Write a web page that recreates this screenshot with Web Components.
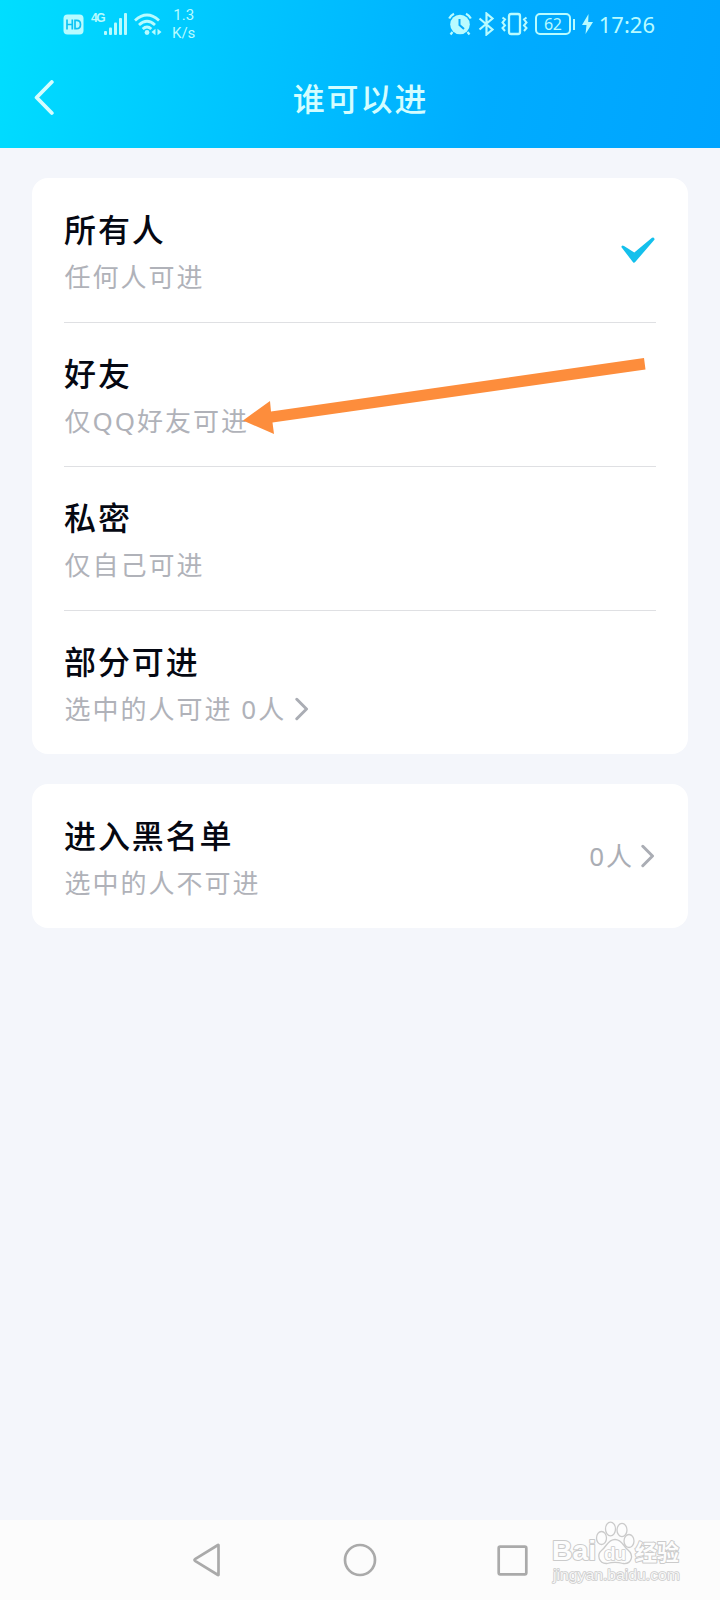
<!DOCTYPE html>
<html lang="zh-CN">
<head>
<meta charset="utf-8">
<meta name="viewport" content="width=device-width, initial-scale=1">
<title>谁可以进</title>
<style>
  html, body {
    margin: 0;
    padding: 0;
  }
  body {
    width: 720px;
    height: 1600px;
    overflow: hidden;
    font-family: "Noto Sans", "Noto Sans CJK SC", sans-serif;
  }
</style>
</head>
<body>
<access-page>
  <page-header slot="header">谁可以进</page-header>

  <setting-card>
    <setting-row>
      所有人
      <span slot="note">任何人可进</span>
      <app-icon slot="end" name="check"></app-icon>
    </setting-row>
    <setting-row>
      好友
      <span slot="note">仅QQ好友可进</span>
    </setting-row>
    <setting-row>
      私密
      <span slot="note">仅自己可进</span>
    </setting-row>
    <setting-row>
      部分可进
      <span slot="note">选中的人可进 0人</span>
      <app-icon slot="more" name="next"></app-icon>
    </setting-row>
  </setting-card>

  <setting-card>
    <setting-row>
      进入黑名单
      <span slot="note">选中的人不可进</span>
      <span slot="end">0人</span>
      <app-icon slot="end" name="next"></app-icon>
    </setting-row>
  </setting-card>

  <pointer-arrow slot="overlay"></pointer-arrow>
  <nav-bar slot="footer"></nav-bar>
  <site-mark slot="overlay"></site-mark>
</access-page>

<script>
const ICONS = {
  hd: [21, 21, `
    <rect x=".5" y=".5" width="20" height="20" rx="4" fill="currentColor"/>
    <path d="M4 5.5v10M9.3 5.5v10M4 10.5h5.3M12 6.3v8.4h1.6c2.7 0 3.9-1.6 3.9-4.2s-1.2-4.2-3.9-4.2z" fill="none" stroke="#0cc3f4" stroke-width="1.7"/>`],
  signal: [24, 22, `
    <g fill="currentColor">
      <rect x="0" y="18" width="3" height="4" rx="1"/>
      <rect x="5" y="14.500" width="3" height="7.500" rx="1"/>
      <rect x="10" y="9.500" width="3" height="12.500" rx="1"/>
      <rect x="15" y="5" width="3" height="17" rx="1"/>
      <rect x="20" y="0" width="3" height="22" rx="1"/>
    </g>`],
  wifi: [28, 23, `
    <g fill="none" stroke="currentColor" stroke-width="2.800">
      <path d="M1 7.500Q13 -3.500 25 7.500"/>
      <path d="M5 12Q13 4.500 21 12"/>
      <path d="M8.700 16Q13 12 17.300 16"/>
    </g>
    <circle cx="13" cy="19.500" r="2.400" fill="currentColor"/>
    <path d="M17.500 19l4-3.300v6.600zM27.500 19l-4-3.300v6.600z" fill="currentColor"/>`],
  alarm: [24, 24, `
    <circle cx="12" cy="12.500" r="9.800" fill="currentColor"/>
    <path d="M1.200 6.500A11 11 0 0 1 6 1.700M18 1.700A11 11 0 0 1 22.800 6.500M4.500 20l-2 2.500M19.500 20l2 2.500" fill="none" stroke="currentColor" stroke-width="2.200"/>
    <path d="M11.500 7v6l4.500 4" fill="none" stroke="#07a9fa" stroke-width="2"/>`],
  bluetooth: [17, 24, `
    <path d="M1.500 6.500L14.500 17.500L8.500 22.500V1.500L14.500 6.500L1.500 17.500" fill="none" stroke="currentColor" stroke-width="2.200"/>`],
  vibrate: [27, 24, `
    <rect x="8" y="2" width="11" height="20" rx="2" fill="none" stroke="currentColor" stroke-width="2.300"/>
    <path d="M1.500 5.500l2.500 2-2.500 3 2.500 3-2.500 2.500 2.500 3M25.500 5.500l-2.500 2 2.500 3-2.500 3 2.500 2.500-2.500 3" fill="none" stroke="currentColor" stroke-width="2"/>`],
  bolt: [11, 20, `
    <path d="M6.500 0L0 11h4.500L3.500 20L11 8H6.200z" fill="currentColor"/>`],
  back: [20, 36, `
    <path d="M17.800 2L2.600 17.500L17.800 33" fill="none" stroke="currentColor" stroke-width="3.800" stroke-linecap="round" stroke-linejoin="round"/>`],
  next: [14, 24, `
    <path d="M1.800 2.300L11.500 12L1.800 21.700" fill="none" stroke="#aaadb4" stroke-width="3" stroke-linecap="round" stroke-linejoin="round"/>`],
  check: [34, 26, `
    <path d="M.3 10Q.8 7.600 3 9L13.300 15.500L31 .8Q33.300 -.2 33.600 2.400L14 25.300Q13 26.200 12 25.200z" fill="#14c0ec"/>`],
  navBack: [30, 34, `
    <path d="M26.500 2.200V31.800Q26.500 32.200 26 32L3 17.800Q2 17 3 16.200L26 2Q26.500 1.800 26.500 2.200z" fill="none" stroke="currentColor" stroke-width="2.700" stroke-linejoin="round"/>`],
  navHome: [34, 34, `
    <circle cx="17" cy="17" r="15" fill="none" stroke="currentColor" stroke-width="2.700"/>`],
  navRecent: [31, 31, `
    <rect x="1.700" y="1.700" width="27.600" height="27.600" rx="1.500" fill="none" stroke="currentColor" stroke-width="2.700"/>`]
}

function define(name, html) {
  customElements.define(name, class extends HTMLElement {
    constructor() {
      super()
      this.attachShadow({ mode: 'open' })
      this.shadowRoot.innerHTML = html
    }
  })
}

class AppIcon extends HTMLElement {
  constructor() {
    super()
    this.attachShadow({ mode: 'open' })
  }

  connectedCallback() {
    const [w, h, shape] = ICONS[this.getAttribute('name')]
    this.shadowRoot.innerHTML = `
      <style>
        :host { display: block; flex: none; }
        svg { display: block; }
      </style>
      <svg width="${w}" height="${h}" viewBox="0 0 ${w} ${h}" aria-hidden="true">${shape}</svg>
    `
  }
}

customElements.define('app-icon', AppIcon)

define('access-page', `
  <style>
    :host {
      display: flex;
      flex-direction: column;
      position: relative;
      height: 1600px;
      background: #f4f6fb;
    }
    main {
      flex: 1;
      display: flex;
      flex-direction: column;
      gap: 30px;
      padding: 30px 32px;
    }
  </style>
  <slot name="header"></slot>
  <main><slot></slot></main>
  <slot name="footer"></slot>
  <slot name="overlay"></slot>
`)

define('status-bar', `
  <style>
    :host {
      display: flex;
      justify-content: space-between;
      height: 48px;
      padding: 0 65px 0 63px;
      box-sizing: border-box;
      color: #b8fbff;
    }
    .group {
      display: flex;
      align-items: center;
      height: 48px;
    }
    .net {
      align-self: flex-start;
      width: 14px;
      margin: 11px -1px 0 7px;
      font: 700 12px/14px "Liberation Sans", sans-serif;
      letter-spacing: -1.500px;
    }
    .wifi { margin-left: 6px; }
    .speed {
      margin-left: 10px;
      font: 15px/18px Roboto, sans-serif;
      text-align: center;
    }
    .battery {
      display: flex;
      align-items: center;
      margin-left: 7px;
    }
    .level {
      width: 36px;
      height: 22px;
      box-sizing: border-box;
      border: 2px solid currentColor;
      border-radius: 5px;
      font-size: 16px;
      line-height: 18px;
      letter-spacing: -.5px;
      text-align: center;
    }
    .tip {
      width: 2px;
      height: 11px;
      margin-left: 2px;
      background: currentColor;
    }
    .time {
      margin-left: 6px;
      font-size: 22px;
      line-height: 30px;
    }
  </style>
  <div class="group">
    <app-icon name="hd"></app-icon>
    <span class="net">4G</span>
    <app-icon name="signal"></app-icon>
    <app-icon class="wifi" name="wifi"></app-icon>
    <div class="speed"><div>1.3</div><div>K/s</div></div>
  </div>
  <div class="group">
    <app-icon name="alarm"></app-icon>
    <app-icon name="bluetooth" style="margin-left: 6px"></app-icon>
    <app-icon name="vibrate" style="margin-left: 6px"></app-icon>
    <div class="battery"><div class="level">62</div><div class="tip"></div></div>
    <app-icon name="bolt" style="margin-left: 7px"></app-icon>
    <span class="time">17:26</span>
  </div>
`)

define('page-header', `
  <style>
    :host {
      display: block;
      height: 148px;
      background: linear-gradient(102deg, #00deff 0%, #00c5ff 33%, #00acff 68%, #00a4ff 100%);
    }
    .bar {
      display: grid;
      grid-template-columns: 60px 1fr 60px;
      align-items: center;
      height: 100px;
      padding: 0 33px 0 34px;
      color: #d4fdff;
    }
    h1 {
      margin: 2px 0 0;
      font-size: 32px;
      font-weight: 500;
      line-height: 48px;
      letter-spacing: 1.900px;
      text-align: center;
    }
  </style>
  <status-bar></status-bar>
  <div class="bar">
    <app-icon name="back"></app-icon>
    <h1><slot></slot></h1>
  </div>
`)

define('setting-card', `
  <style>
    :host {
      display: block;
      padding: 0 32px;
      border-radius: 16px;
      background: #fff;
    }
    ::slotted(setting-row:not(:first-child)) {
      border-top: 1px solid #dfe0e3;
    }
  </style>
  <slot></slot>
`)

define('setting-row', `
  <style>
    :host {
      display: flex;
      align-items: center;
      justify-content: space-between;
      height: 144px;
      box-sizing: border-box;
    }
    .title {
      color: #050812;
      font-size: 32px;
      font-weight: 500;
      line-height: 48px;
      letter-spacing: 1.900px;
    }
    .note, .end {
      display: flex;
      align-items: center;
      color: #b0b2b9;
      font-size: 26px;
      line-height: 36px;
      letter-spacing: 2px;
    }
    .note {
      gap: 9px;
      margin-top: 5px;
      padding-left: .5px;
    }
    .end {
      gap: 7px;
      padding-right: 1px;
      color: #aaadb4;
    }
  </style>
  <div>
    <div class="title"><slot></slot></div>
    <div class="note"><slot name="note"></slot><slot name="more"></slot></div>
  </div>
  <div class="end"><slot name="end"></slot></div>
`)

define('pointer-arrow', `
  <style>
    :host {
      display: block;
      position: absolute;
      left: 240px;
      top: 350px;
      pointer-events: none;
    }
    svg { display: block; }
  </style>
  <svg width="410" height="90" viewBox="240 350 410 90" aria-hidden="true">
    <path d="M243 420.500L270 401L271 411.500L644 358L645.500 369.500L272.500 422.500L274 434z" fill="#fd8d3c"/>
  </svg>
`)

define('nav-bar', `
  <style>
    :host {
      display: flex;
      align-items: center;
      height: 80px;
      padding: 0 192px;
      justify-content: space-between;
      box-sizing: border-box;
      background: #fcfcfc;
      color: #aaa;
    }
  </style>
  <app-icon name="navBack"></app-icon>
  <app-icon name="navHome"></app-icon>
  <app-icon name="navRecent"></app-icon>
`)

// outlined watermark over the bottom right corner
define('site-mark', `
  <style>
    :host {
      display: block;
      position: absolute;
      left: 548px;
      top: 1518px;
      pointer-events: none;
    }
    svg { display: block; }
    text {
      font-family: "Liberation Sans", "Noto Sans CJK SC", sans-serif;
      font-weight: 700;
      paint-order: stroke;
      fill: #fdfdfd;
      stroke: #cbcbcb;
      stroke-width: 2px;
      stroke-linejoin: round;
    }
    .url {
      font-weight: 400;
      fill: #f6f6f6;
      stroke-width: 1.400px;
    }
  </style>
  <svg width="140" height="70" viewBox="548 1518 140 70">
    <text x="552" y="1560" font-size="27" textLength="44" lengthAdjust="spacingAndGlyphs">Bai</text>
    <g fill="#fdfdfd" stroke="#cbcbcb" stroke-width="1.300">
      <ellipse cx="601.500" cy="1538" rx="5" ry="6.500"/>
      <ellipse cx="610.500" cy="1529" rx="5" ry="6.800"/>
      <ellipse cx="622" cy="1530" rx="5" ry="6.600"/>
      <ellipse cx="629" cy="1541" rx="5" ry="6.500"/>
      <path d="M615 1539.500C608 1539.500 607 1546 602 1550C596 1555 599 1564 607 1563.500C612 1562 618 1562 623 1563.500C632 1564.500 634 1555 628 1550C623 1546 622 1539.500 615 1539.500z"/>
    </g>
    <text x="604" y="1560" font-size="19" textLength="22" style="stroke-width: 1.600px">du</text>
    <text x="635" y="1560" font-size="22" textLength="44">经验</text>
    <text class="url" x="553" y="1580" font-size="14" textLength="127" lengthAdjust="spacingAndGlyphs">jingyan.baidu.com</text>
  </svg>
`)
</script>
</body>
</html>
